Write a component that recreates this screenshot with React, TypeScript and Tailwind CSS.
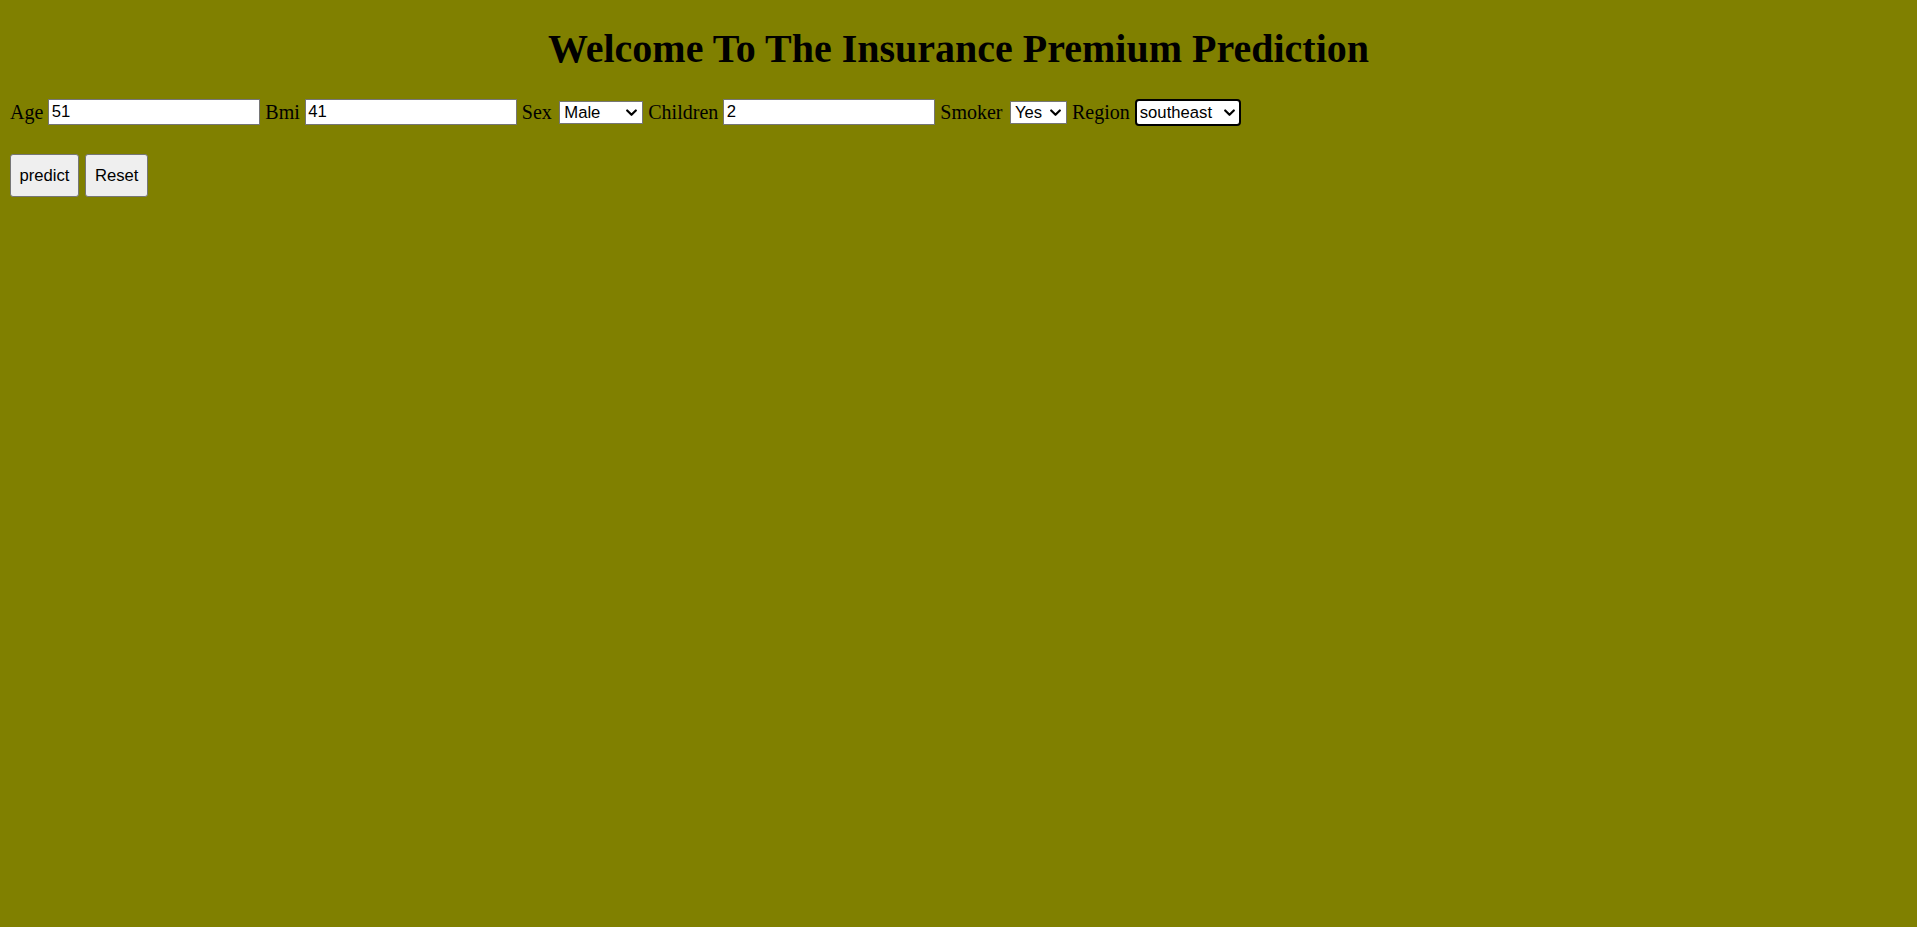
import React from "react";

function Chevron() {
  return (
    <svg
      className="pointer-events-none absolute right-[6px] top-1/2 -translate-y-1/2 mt-[1px]"
      width="11"
      height="8"
      viewBox="0 0 11 8"
      fill="none"
    >
      <polyline points="1.2,1.5 5.5,5.8 9.8,1.5" stroke="#000" strokeWidth="2.2" strokeLinecap="round" strokeLinejoin="round" />
    </svg>
  );
}

const label = "text-[20px] leading-[23px] font-['Liberation_Serif','Times_New_Roman',serif] text-black whitespace-nowrap";
const control = "text-[16.67px] leading-[19px] font-['Liberation_Sans',Arial,sans-serif] text-black bg-white";

export default function App() {
  return (
    <div className="min-h-screen w-full bg-[#808000] px-[10px] pt-[25.5px] text-black">
      <h1 className="text-center text-[40px] leading-[46px] font-bold font-['Liberation_Serif','Times_New_Roman',serif]">
        Welcome To The Insurance Premium Prediction
      </h1>

      <form className="mt-[27.8px]" onSubmit={(e) => e.preventDefault()}>
        <div className="flex h-[26px] items-center gap-[5px]">
          <span className={label}>Age</span>
          <input
            type="text"
            defaultValue="51"
            className={`${control} w-[212px] h-[26px] border border-[#767676] px-[2.5px] py-0 outline-none`}
          />
          <span className={label}>Bmi</span>
          <input
            type="text"
            defaultValue="41"
            className={`${control} w-[212px] h-[26px] border border-[#767676] px-[2.5px] py-0 outline-none`}
          />
          <span className={label}>Sex</span>
          <span className="relative ml-[2.5px] flex">
            <select
              defaultValue="male"
              className={`${control} appearance-none w-[84px] h-[23.3px] border border-[#767676] pl-[4px] py-0 outline-none`}
            >
              <option value="male">Male</option>
              <option value="female">Female</option>
            </select>
            <Chevron />
          </span>
          <span className={label}>Children</span>
          <input
            type="text"
            defaultValue="2"
            className={`${control} w-[212px] h-[26px] border border-[#767676] px-[2.5px] py-0 outline-none`}
          />
          <span className={label}>Smoker</span>
          <span className="relative ml-[2.5px] flex">
            <select
              defaultValue="yes"
              className={`${control} appearance-none w-[57px] h-[23.3px] border border-[#767676] pl-[4px] py-0 outline-none`}
            >
              <option value="yes">Yes</option>
              <option value="no">No</option>
            </select>
            <Chevron />
          </span>
          <span className={label}>Region</span>
          <span className="relative flex">
            <select
              defaultValue="southeast"
              className={`${control} appearance-none w-[106px] h-[26.7px] border-2 border-black rounded-[4px] pl-[3px] py-0 outline-none`}
            >
              <option value="southeast">southeast</option>
              <option value="southwest">southwest</option>
              <option value="northeast">northeast</option>
              <option value="northwest">northwest</option>
            </select>
            <Chevron />
          </span>
        </div>

        <div className="mt-[29px] flex gap-[6.4px]">
          <button
            type="submit"
            className="h-[42.4px] px-[8.5px] border border-[#767676] rounded-[3px] bg-[#efefef] text-[16.67px] leading-[19px] font-['Liberation_Sans',Arial,sans-serif] text-black"
          >
            predict
          </button>
          <button
            type="reset"
            className="h-[42.4px] px-[8.5px] border border-[#767676] rounded-[3px] bg-[#efefef] text-[16.67px] leading-[19px] font-['Liberation_Sans',Arial,sans-serif] text-black"
          >
            Reset
          </button>
        </div>
      </form>
    </div>
  );
}
